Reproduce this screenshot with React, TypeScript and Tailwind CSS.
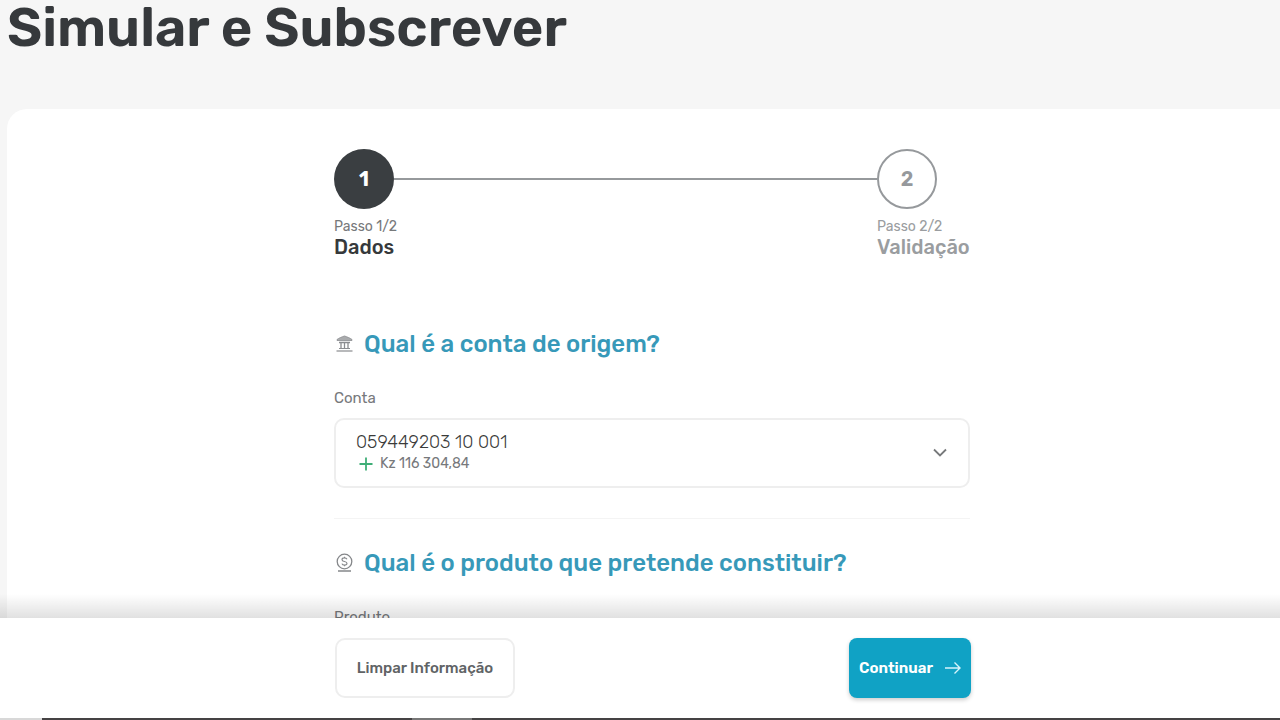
import React from "react";

type StepProps = { number: number; caption: string; label: string; active?: boolean };

function Step({ number, caption, label, active = false }: StepProps) {
  return (
    <li
      aria-current={active ? "step" : undefined}
      className={active ? "w-[62px] text-[#36393b]" : "w-[93px] text-[#9a9da0]"}
    >
      <span
        className={
          active
            ? "flex size-[60px] items-center justify-center rounded-full bg-[#3a3e41] text-xl font-bold text-white"
            : "flex size-[60px] items-center justify-center rounded-full border-2 border-[#96999c] bg-white text-xl font-semibold text-[#96999c]"
        }
      >
        {number}
      </span>
      <span
        className={
          active
            ? "mt-2 block text-sm leading-5 whitespace-nowrap text-[#77797b]"
            : "mt-2 block text-sm leading-5 whitespace-nowrap text-[#9a9da0]"
        }
      >
        {caption}
      </span>
      <span className="block text-xl leading-5 font-medium whitespace-nowrap">{label}</span>
    </li>
  );
}

function BankIcon() {
  return (
    <svg viewBox="0 0 20 20" className="size-5 shrink-0" fill="none" stroke="#8b8d90" aria-hidden="true">
      <path d="M3 5.500C5 4 7.500 3 10.500 2C13.500 3 16 4 18 5.500V6.500H3Z" fill="#a9abad" strokeWidth="0.800" />
      <path d="M5 8.500h11M7 9v5M10.500 9v5M14 9v5" strokeWidth="1.300" />
      <path d="M5 14.500h11" strokeWidth="1" />
      <path d="M2.500 17h16" strokeWidth="1.500" stroke="#a0a2a4" />
    </svg>
  );
}

function CoinIcon() {
  return (
    <svg viewBox="0 0 20 20" className="size-5 shrink-0" fill="none" stroke="#85878a" aria-hidden="true">
      <circle cx="10.500" cy="8.500" r="7.300" strokeWidth="1.300" />
      <path d="M13 6.300C12.500 5.300 11.600 4.900 10.500 4.900C9.100 4.900 8 5.600 8 6.700C8 9.300 13 7.600 13 10.300C13 11.400 11.900 12.100 10.500 12.100C9.300 12.100 8.300 11.600 7.900 10.600M10.500 3.800v1.100M10.500 12.100v1.200" strokeWidth="1.100" />
      <path d="M4 18h13" strokeWidth="1.500" />
    </svg>
  );
}

function SectionTitle({ icon, children }: { icon: React.ReactNode; children: React.ReactNode }) {
  return (
    <h2 className="flex items-center gap-[10px] text-2xl leading-8 font-medium text-[#3799b9]">
      {icon}
      {children}
    </h2>
  );
}

export default function App() {
  return (
    <div className="flex h-screen flex-col overflow-hidden bg-[#f6f6f6] font-['Rubik','Roboto',sans-serif] text-[#3a3e41]">
      <main className="flex min-h-0 flex-1 flex-col overflow-y-auto [scrollbar-width:none]">
        <h1 className="shrink-0 pl-[7px] text-[54px] leading-14 font-semibold text-[#36393c]">Simular e Subscrever</h1>

        <div className="mt-[53px] ml-[7px] shrink-0 rounded-tl-[20px] bg-white pt-10 pb-10 pl-[17px]">
          <div className="mx-auto w-full max-w-[636px]">
            <ol className="flex">
              <Step number={1} caption="Passo 1/2" label="Dados" active />
              <li role="presentation" className="mt-[29px] -ml-[2px] h-[2px] flex-1 bg-[#96999c]" />
              <Step number={2} caption="Passo 2/2" label="Validação" />
            </ol>

            <section className="mt-[71px] border-b border-[#f4f4f4] pb-[30px]">
              <SectionTitle icon={<BankIcon />}>Qual é a conta de origem?</SectionTitle>
              <label htmlFor="conta" className="mt-[26px] block text-[15px] leading-6 text-[#77797c]">
                Conta
              </label>
              <div className="relative mt-2">
                <select
                  id="conta"
                  className="block h-[70px] w-full appearance-none rounded-[10px] border-2 border-[#eeeeee] bg-white pr-12 pb-[22px] pl-5 text-lg font-light text-[#3a3b3a]"
                >
                  <option>059449203 10 001</option>
                </select>
                <div className="pointer-events-none absolute bottom-[14px] left-6 flex items-center gap-[6px] text-sm leading-5 text-[#77797c]">
                  <svg viewBox="0 0 16 16" className="size-4" fill="none" stroke="#3fae77" strokeWidth="1.800" aria-hidden="true">
                    <path d="M8 1.500v13M1.500 8h13" />
                  </svg>
                  Kz 116 304,84
                </div>
                <svg
                  viewBox="0 0 16 16"
                  className="pointer-events-none absolute top-[27px] right-[22px] size-4"
                  fill="none"
                  stroke="#77797b"
                  strokeWidth="1.800"
                  aria-hidden="true"
                >
                  <path d="M2 4.500l6 6 6-6" />
                </svg>
              </div>
            </section>

            <section className="mt-7">
              <SectionTitle icon={<CoinIcon />}>Qual é o produto que pretende constituir?</SectionTitle>
              <label htmlFor="produto" className="mt-[26px] block text-[15px] leading-6 text-[#77797c]">
                Produto
              </label>
              <select
                id="produto"
                className="mt-2 block h-[70px] w-full appearance-none rounded-[10px] border-2 border-[#eeeeee] bg-white px-5 text-lg"
              />
            </section>
          </div>
        </div>
      </main>

      <footer className="relative shrink-0 bg-white">
        <div className="pointer-events-none absolute inset-x-0 bottom-full h-6 bg-linear-to-t from-black/12 to-transparent" />
        <div className="py-5 pl-[26px]">
          <div className="mx-auto flex w-full max-w-[636px] justify-between">
            <button
              type="button"
              className="h-[60px] w-[180px] rounded-[10px] border-2 border-[#eeeeee] bg-white text-[15px] font-medium text-[#606365]"
            >
              Limpar Informação
            </button>
            <button
              type="button"
              className="flex h-[60px] w-[122px] items-center justify-center gap-3 rounded-[8px] bg-[#10a2c5] text-[15px] font-semibold text-white shadow-[0_2px_4px_rgba(0,0,0,0.2)]"
            >
              Continuar
              <svg viewBox="0 0 16 16" className="size-4" fill="none" stroke="#d6f4fb" strokeWidth="1.400" aria-hidden="true">
                <path d="M0 8h15M9.500 2.500l5.500 5.500-5.500 5.500" />
              </svg>
            </button>
          </div>
        </div>
        <div className="flex h-[2px]" aria-hidden="true">
          <span className="w-[42px] bg-[#d8d8d8]" />
          <span className="w-[370px] bg-[#454344]" />
          <span className="w-[60px] bg-[#777777]" />
          <span className="flex-1 bg-[#454344]" />
        </div>
      </footer>
    </div>
  );
}
